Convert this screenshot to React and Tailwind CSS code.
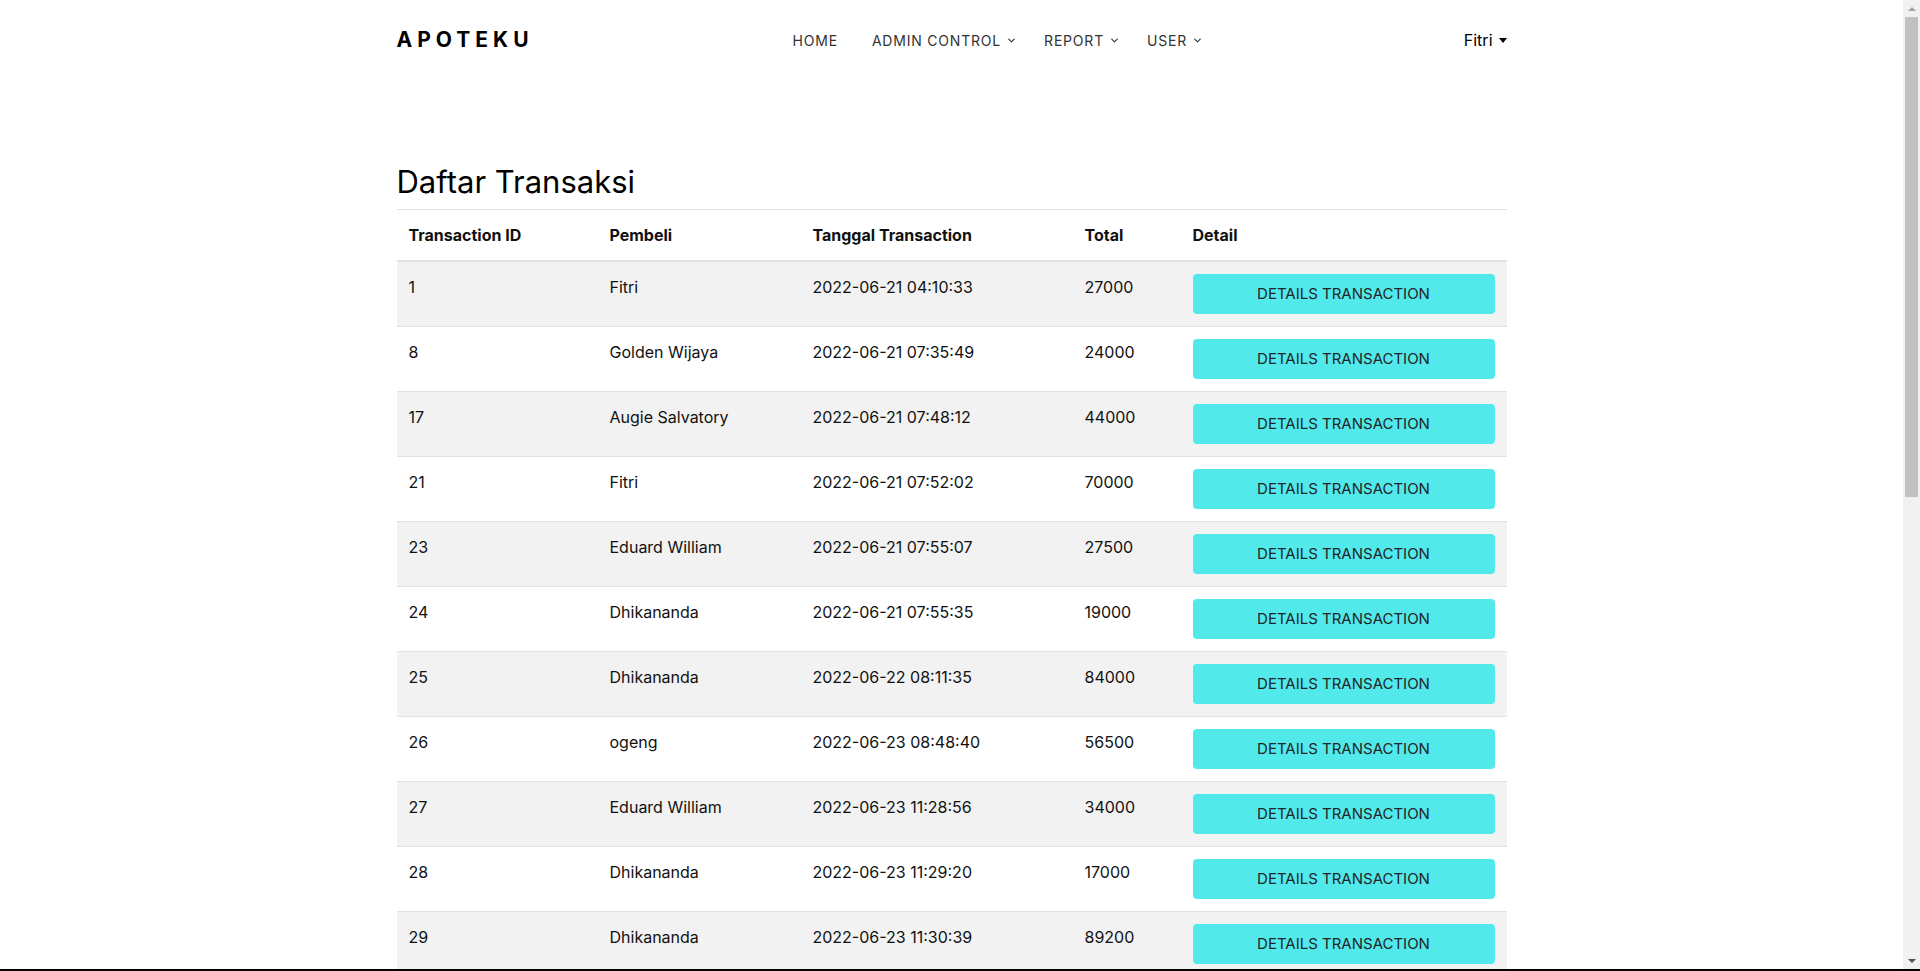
import React from 'react';
import { ChevronDown } from 'lucide-react';

const rows = [
  ['1', 'Fitri', '2022-06-21 04:10:33', '27000'],
  ['8', 'Golden Wijaya', '2022-06-21 07:35:49', '24000'],
  ['17', 'Augie Salvatory', '2022-06-21 07:48:12', '44000'],
  ['21', 'Fitri', '2022-06-21 07:52:02', '70000'],
  ['23', 'Eduard William', '2022-06-21 07:55:07', '27500'],
  ['24', 'Dhikananda', '2022-06-21 07:55:35', '19000'],
  ['25', 'Dhikananda', '2022-06-22 08:11:35', '84000'],
  ['26', 'ogeng', '2022-06-23 08:48:40', '56500'],
  ['27', 'Eduard William', '2022-06-23 11:28:56', '34000'],
  ['28', 'Dhikananda', '2022-06-23 11:29:20', '17000'],
  ['29', 'Dhikananda', '2022-06-23 11:30:39', '89200'],
];

const NavItem = ({ label, caret }) => (
  <a href="#" className="flex items-center gap-[5px] text-[14px] tracking-[0.8px] text-[#333]">
    {label}
    {caret && <ChevronDown size={11} strokeWidth={2.5} className="mt-[1px]" />}
  </a>
);

const ScrollRail = () => (
  <div className="flex w-[17px] shrink-0 flex-col bg-[#f1f1f1]">
    <div className="flex h-[17px] items-center justify-center">
      <span className="border-x-[4px] border-b-[4px] border-x-transparent border-b-[#a3a3a3]" />
    </div>
    <div className="flex-1 px-[2px]">
      <div className="h-[480px] bg-[#c1c1c1]" />
    </div>
    <div className="flex h-[17px] items-center justify-center">
      <span className="border-x-[4px] border-t-[4px] border-x-transparent border-t-[#505050]" />
    </div>
  </div>
);

const App = () => {
  return (
    <div className="flex h-screen flex-col bg-white text-[#111] font-['Inter','Open_Sans',sans-serif]">
      <div className="flex min-h-0 flex-1">
        <div className="min-w-0 flex-1 overflow-hidden">
          <nav className="mx-auto flex h-[80px] w-[1110px] items-center">
            <a href="#" className="w-[396px] text-[21px] font-bold tracking-[5px] text-black">
              APOTEKU
            </a>
            <div className="flex items-center">
              <NavItem label="HOME" />
              <div className="w-[34px]" />
              <NavItem label="ADMIN CONTROL" caret />
              <div className="w-[27px]" />
              <NavItem label="REPORT" caret />
              <div className="w-[27px]" />
              <NavItem label="USER" caret />
            </div>
            <div className="flex flex-1 justify-end">
              <button className="flex items-center text-[16px] text-black">
                Fitri
                <span className="ml-[6px] mt-[1px] border-x-[4px] border-t-[5px] border-x-transparent border-t-black" />
              </button>
            </div>
          </nav>

          <main className="mx-auto w-[1110px]">
            <h2 className="mt-[83px] mb-[8px] text-[31px] leading-[38px] font-normal text-black">
              Daftar Transaksi
            </h2>
            <table className="w-full table-fixed border-collapse text-[16px]">
              <colgroup>
                <col className="w-[201px]" />
                <col className="w-[203px]" />
                <col className="w-[272px]" />
                <col className="w-[108px]" />
                <col />
              </colgroup>
              <thead>
                <tr className="border-t border-b-2 border-t-[#dee2e6] border-b-[#dee2e6]">
                  <th className="px-3 py-[13px] text-left leading-6 font-bold">Transaction ID</th>
                  <th className="px-3 py-[13px] text-left leading-6 font-bold">Pembeli</th>
                  <th className="px-3 py-[13px] text-left leading-6 font-bold">Tanggal Transaction</th>
                  <th className="px-3 py-[13px] text-left leading-6 font-bold">Total</th>
                  <th className="px-3 py-[13px] text-left leading-6 font-bold">Detail</th>
                </tr>
              </thead>
              <tbody>
                {rows.map((r, i) => (
                  <tr
                    key={r[0]}
                    className={(i % 2 === 0 ? 'bg-[#f2f2f2] ' : 'bg-white ') + 'border-b border-[#dee2e6]'}
                  >
                    <td className="px-3 pt-[13px] pb-3 align-top leading-6">{r[0]}</td>
                    <td className="px-3 pt-[13px] pb-3 align-top leading-6">{r[1]}</td>
                    <td className="px-3 pt-[13px] pb-3 align-top leading-6">{r[2]}</td>
                    <td className="px-3 pt-[13px] pb-3 align-top leading-6">{r[3]}</td>
                    <td className="p-3 align-top">
                      <button className="flex h-[40px] w-full items-center justify-center rounded-[4px] bg-[#52e9ea] text-[15px] text-[#212529]">
                        DETAILS TRANSACTION
                      </button>
                    </td>
                  </tr>
                ))}
              </tbody>
            </table>
          </main>
        </div>
        <ScrollRail />
      </div>
      <div className="h-[2px] shrink-0 bg-black" />
    </div>
  );
};

export default App;
